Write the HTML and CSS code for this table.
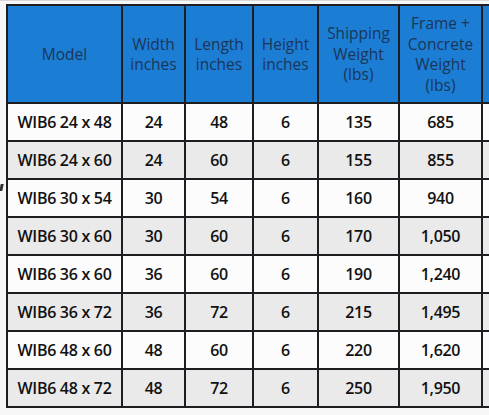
FILE: index.html
```html
<!DOCTYPE html>
<html lang="en">
<head>
<meta charset="utf-8">
<title>WIB6 Specifications</title>
<link rel="stylesheet" href="styles.css">
</head>
<body>
<div class="page">
  <span class="mark"></span>
  <table class="spec">
    <colgroup>
      <col class="c-model"><col class="c-w"><col class="c-l"><col class="c-h"><col class="c-s"><col class="c-f"><col class="c-x">
    </colgroup>
    <thead>
      <tr>
        <th>Model</th>
        <th>Width<br>inches</th>
        <th>Length<br>inches</th>
        <th>Height<br>inches</th>
        <th>Shipping<br>Weight<br>(lbs)</th>
        <th>Frame +<br>Concrete<br>Weight<br>(lbs)</th>
        <th></th>
      </tr>
    </thead>
    <tbody>
      <tr><td>WIB6 24 x 48</td><td>24</td><td>48</td><td>6</td><td>135</td><td>685</td><td></td></tr>
      <tr class="shade"><td>WIB6 24 x 60</td><td>24</td><td>60</td><td>6</td><td>155</td><td>855</td><td></td></tr>
      <tr><td>WIB6 30 x 54</td><td>30</td><td>54</td><td>6</td><td>160</td><td>940</td><td></td></tr>
      <tr class="shade"><td>WIB6 30 x 60</td><td>30</td><td>60</td><td>6</td><td>170</td><td>1,050</td><td></td></tr>
      <tr><td>WIB6 36 x 60</td><td>36</td><td>60</td><td>6</td><td>190</td><td>1,240</td><td></td></tr>
      <tr class="shade"><td>WIB6 36 x 72</td><td>36</td><td>72</td><td>6</td><td>215</td><td>1,495</td><td></td></tr>
      <tr><td>WIB6 48 x 60</td><td>48</td><td>60</td><td>6</td><td>220</td><td>1,620</td><td></td></tr>
      <tr class="shade"><td>WIB6 48 x 72</td><td>48</td><td>72</td><td>6</td><td>250</td><td>1,950</td><td></td></tr>
    </tbody>
  </table>
</div>
</body>
</html>
```
FILE: styles.css
```css
html, body {
  margin: 0;
  padding: 0;
  overflow: hidden;
  background: #f7f7f7;
}
.page {
  position: relative;
  width: 489px;
  height: 415px;
  overflow: hidden;
  padding: 3px 0 0 6px;
  box-sizing: border-box;
  border-top: 1px solid #d8d8d8;
}
.mark {
  position: absolute;
  left: 0;
  top: 183px;
  width: 3px;
  height: 7px;
  background: #333;
  transform: skewX(-12deg);
}
.spec {
  border-collapse: collapse;
  table-layout: fixed;
  width: 520px;
  font-family: "Open Sans", "Liberation Sans", sans-serif;
}
.c-model { width: 115px; }
.c-w { width: 63px; }
.c-l { width: 68px; }
.c-h { width: 65px; }
.c-s { width: 81px; }
.c-f { width: 83px; }
.c-x { width: 45px; }
.spec th, .spec td {
  border: 2px solid #1e1e22;
  text-align: center;
  padding: 0;
}
.spec th {
  background: #1b7dd4;
  color: #1b3658;
  font-weight: 400;
  font-size: 15.5px;
  line-height: 20.5px;
  height: 96px;
}
.spec td {
  background: #fcfcfc;
  color: #111;
  font-weight: 600;
  font-size: 16px;
  letter-spacing: -0.3px;
  height: 36px;
}
.spec tr.shade td {
  background: #eaeaea;
}
```
